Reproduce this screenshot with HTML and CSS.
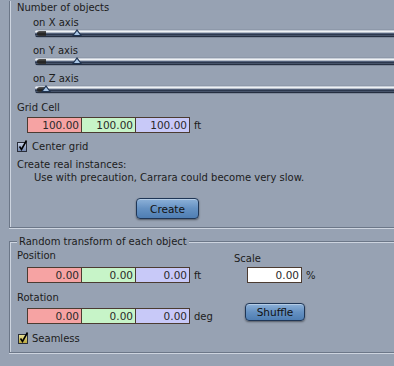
FILE: index.html
```html
<!DOCTYPE html>
<html lang="en">

<head>
    <meta charset="UTF-8">
    <meta name="viewport" content="width=device-width, initial-scale=1.0">
    <title>Replicate</title>
    <link rel="stylesheet" href="styles.css">
</head>

<body>
    <div class="group objects">
        <div class="title">Number of objects</div>
        <div class="axis">
            <div class="axis-label">on X axis</div>
            <div class="slider"><span class="cap"></span><span class="knob knob-mid"></span></div>
        </div>
        <div class="axis">
            <div class="axis-label">on Y axis</div>
            <div class="slider"><span class="cap"></span><span class="knob knob-mid"></span></div>
        </div>
        <div class="axis">
            <div class="axis-label">on Z axis</div>
            <div class="slider"><span class="cap"></span><span class="knob knob-min"></span></div>
        </div>

        <div class="label">Grid Cell</div>
        <div class="vector grid-row">
            <div class="cells">
                <span class="cell red">100.00</span>
                <span class="cell green">100.00</span>
                <span class="cell blue">100.00</span>
            </div>
            <span class="unit">ft</span>
        </div>

        <div class="check-row center-row">
            <svg class="check" width="13" height="13" viewBox="0 0 13 13">
                <defs>
                    <linearGradient id="cb-blue" x1="0" y1="0" x2="0" y2="1">
                        <stop offset="0" stop-color="#c9d3e6" />
                        <stop offset="1" stop-color="#6f84ad" />
                    </linearGradient>
                </defs>
                <rect x="0.5" y="2.5" width="9" height="9" fill="url(#cb-blue)" stroke="#2b2f3a" />
                <path d="M2.5 6.5 L4.5 9.5 L9.5 0.5" fill="none" stroke="#000" stroke-width="1.6" />
            </svg>
            <span>Center grid</span>
        </div>

        <div class="label create-label">Create real instances:</div>
        <div class="label note">Use with precaution, Carrara could become very slow.</div>

        <div class="btn-row">
            <button type="button" class="btn create-btn">Create</button>
        </div>
    </div>

    <fieldset class="group random">
        <legend>Random transform of each object</legend>
        <div class="random-body">
            <div class="left-col">
                <div class="label pos-label">Position</div>
                <div class="vector pos-row">
                    <div class="cells">
                        <span class="cell red">0.00</span>
                        <span class="cell green">0.00</span>
                        <span class="cell blue">0.00</span>
                    </div>
                    <span class="unit">ft</span>
                </div>
                <div class="label rot-label">Rotation</div>
                <div class="vector rot-row">
                    <div class="cells">
                        <span class="cell red">0.00</span>
                        <span class="cell green">0.00</span>
                        <span class="cell blue">0.00</span>
                    </div>
                    <span class="unit">deg</span>
                </div>
                <div class="check-row seamless-row">
                    <svg class="check" width="13" height="13" viewBox="0 0 13 13">
                        <defs>
                            <linearGradient id="cb-yellow" x1="0" y1="0" x2="0" y2="1">
                                <stop offset="0" stop-color="#e9e29a" />
                                <stop offset="1" stop-color="#b8a53a" />
                            </linearGradient>
                        </defs>
                        <rect x="1.5" y="2.5" width="9" height="9" fill="url(#cb-yellow)" stroke="#2b2f3a" />
                        <path d="M3.5 6.5 L5.5 9.5 L10.5 0.5" fill="none" stroke="#000" stroke-width="1.6" />
                    </svg>
                    <span>Seamless</span>
                </div>
            </div>
            <div class="right-col">
                <div class="label scale-label">Scale</div>
                <div class="vector scale-row">
                    <span class="cell white">0.00</span>
                    <span class="unit">%</span>
                </div>
                <button type="button" class="btn shuffle-btn">Shuffle</button>
            </div>
        </div>
    </fieldset>
</body>

</html>
```

FILE: styles.css
```css
body {
    margin: 0;
    width: 394px;
    height: 366px;
    overflow: hidden;
    background: #97a2b3;
    font-family: "DejaVu Sans", Verdana, sans-serif;
    font-size: 10px;
    color: #1c1c1c;
}

/* etched group boxes, open on the right */
.group {
    border: none;
    border-left: 1px solid #6c7788;
    border-bottom: 1px solid #6c7788;
    box-shadow: inset 1px 0 0 #cdd4df, 0 1px 0 #cdd4df;
}

.objects {
    margin: 0 0 0 9px;
    padding: 0 0 8px 7px;
}

.title,
.label,
legend {
    line-height: 13px;
    white-space: nowrap;
}

.title {
    margin-top: 1px;
    margin-bottom: 3px;
}

.axis {
    margin-bottom: 7px;
}

.axis-label {
    margin-left: 16px;
    line-height: 12px;
}

/* slider groove */
.slider {
    position: relative;
    height: 9px;
    margin-left: 18px;
    background: linear-gradient(#8e99aa 0, #8e99aa 1px,
            #c7ced8 1px, #c7ced8 2px,
            #eef1f4 2px, #eef1f4 3px,
            #b4bcc8 3px, #b4bcc8 4px,
            #52607a 4px, #52607a 5px,
            #2c384d 5px, #2c384d 6px,
            #46536a 6px, #46536a 7px,
            #252f40 7px, #252f40 8px,
            #7f8a9c 8px);
    border-radius: 4px 0 0 4px;
}

.cap {
    position: absolute;
    left: 2px;
    top: 2px;
    width: 9px;
    height: 5px;
    border-radius: 3px 0 0 3px;
    background: linear-gradient(#5a5a5a, #1e1e1e 60%, #3a3a3a);
}

.knob {
    position: absolute;
    top: 0;
    width: 0;
    height: 0;
    border-left: 5px solid transparent;
    border-right: 5px solid transparent;
    border-bottom: 7px solid #1f3350;
}

.knob::after {
    content: "";
    position: absolute;
    left: -3px;
    top: 2px;
    width: 0;
    height: 0;
    border-left: 3px solid transparent;
    border-right: 3px solid transparent;
    border-bottom: 4px solid #a9c6e6;
}

.knob-mid {
    left: 37px;
}

.knob-min {
    left: 6px;
}

/* coloured number fields */
.vector {
    display: flex;
    align-items: center;
    margin-left: 10px;
}

.grid-row {
    margin-top: 3px;
}

.cells {
    display: flex;
    border: 1px solid #4b3b31;
}

.cell {
    width: 51px;
    height: 14px;
    padding-right: 2px;
    line-height: 14px;
    font-size: 10.5px;
    text-align: right;
    color: #2a2a2a;
}

.cell+.cell {
    border-left: 1px solid #4b3b31;
}

.red {
    background: #f6a3a3;
}

.green {
    background: #c7f4c8;
}

.blue {
    background: #c8c9f8;
}

.white {
    background: #fff;
    border: 1px solid #4b3b31;
}

.unit {
    margin-left: 4px;
    line-height: 13px;
}

.check-row {
    display: flex;
    align-items: center;
    height: 13px;
    line-height: 13px;
}

.check {
    flex: none;
    margin-right: 2px;
}

.center-row {
    margin-top: 7px;
}

.create-label {
    margin-top: 5px;
}

.note {
    margin-left: 17px;
}

.btn-row {
    margin-top: 14px;
    padding-left: 119px;
}

.btn {
    display: block;
    font-family: "DejaVu Sans", Verdana, sans-serif;
    font-size: 10.5px;
    color: #111;
    background: linear-gradient(#8db1d8, #6591c2 50%, #4f7eb3);
    border: 1px solid #1f3656;
    border-radius: 4px;
    box-shadow: 0 1px 2px rgba(0, 0, 0, 0.45), inset 0 1px 0 rgba(255, 255, 255, 0.35);
    padding: 0;
    cursor: pointer;
}

.create-btn {
    width: 63px;
    height: 21px;
}

/* second group */
.random {
    margin: 7px 0 0 9px;
    padding: 0 0 7px 7px;
    min-width: 0;
    border-top: 1px solid #6c7788;
    box-shadow: inset 1px 1px 0 #cdd4df, 0 1px 0 #cdd4df;
}

legend {
    padding: 0 2px;
    background: #97a2b3;
}

.random-body {
    display: flex;
}

.left-col {
    width: 217px;
}

.pos-label {
    margin-top: 1px;
}

.pos-row {
    margin-top: 5px;
}

.rot-label {
    margin-top: 8px;
}

.rot-row {
    margin-top: 4px;
}

.seamless-row {
    margin-top: 8px;
}

.scale-label {
    margin-top: 4px;
}

.scale-row {
    margin-top: 2px;
    margin-left: 13px;
}

.shuffle-btn {
    margin-top: 20px;
    margin-left: 11px;
    width: 60px;
    height: 18px;
}
```
